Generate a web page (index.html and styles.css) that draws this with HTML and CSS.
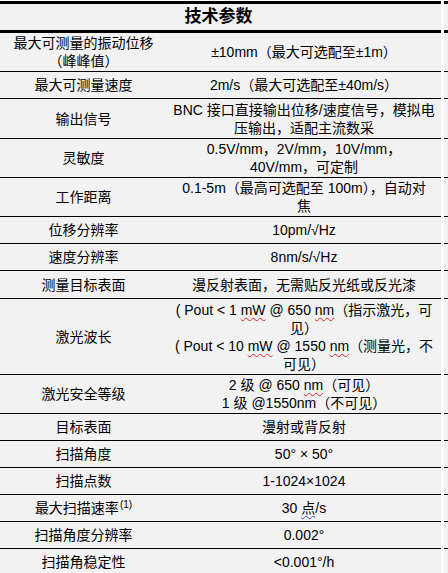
FILE: index.html
```html
<!DOCTYPE html>
<html lang="zh-CN">
<head>
<meta charset="utf-8">
<title>技术参数</title>
<link rel="stylesheet" href="styles.css">
</head>
<body>
<div class="sheet">
  <div class="row head">
    <div class="cell title"><span class="t">技术参数</span></div>
    <div class="gap"></div>
    <div class="stub"></div>
  </div>
  <div class="row h39">
    <div class="cell"><span class="t">最大可测量的振动位移<br>（峰峰值）</span></div>
    <div class="cell"><span class="t">±10mm（最大可选配至±1m）</span></div>
    <div class="gap"></div><div class="stub"></div>
  </div>
  <div class="row h27">
    <div class="cell"><span class="t">最大可测量速度</span></div>
    <div class="cell"><span class="t">2m/s（最大可选配至±40m/s）</span></div>
    <div class="gap"></div><div class="stub"></div>
  </div>
  <div class="row h40">
    <div class="cell"><span class="t">输出信号</span></div>
    <div class="cell"><span class="t">BNC 接口直接输出位移/速度信号，模拟电<br>压输出，适配主流数采</span></div>
    <div class="gap"></div><div class="stub"></div>
  </div>
  <div class="row h39">
    <div class="cell"><span class="t">灵敏度</span></div>
    <div class="cell"><span class="t">0.5V/mm，2V/mm，10V/mm，<br>40V/mm，可定制</span></div>
    <div class="gap"></div><div class="stub"></div>
  </div>
  <div class="row h39">
    <div class="cell"><span class="t">工作距离</span></div>
    <div class="cell"><span class="t">0.1-5m（最高可选配至 100m），自动对<br>焦</span></div>
    <div class="gap"></div><div class="stub"></div>
  </div>
  <div class="row h27">
    <div class="cell"><span class="t">位移分辨率</span></div>
    <div class="cell"><span class="t">10pm/√Hz</span></div>
    <div class="gap"></div><div class="stub"></div>
  </div>
  <div class="row h27">
    <div class="cell"><span class="t">速度分辨率</span></div>
    <div class="cell"><span class="t">8nm/s/√Hz</span></div>
    <div class="gap"></div><div class="stub"></div>
  </div>
  <div class="row h28">
    <div class="cell"><span class="t">测量目标表面</span></div>
    <div class="cell"><span class="t">漫反射表面，无需贴反光纸或反光漆</span></div>
    <div class="gap"></div><div class="stub"></div>
  </div>
  <div class="row h76">
    <div class="cell"><span class="t">激光波长</span></div>
    <div class="cell"><span class="t">( Pout &lt; 1 <span class="sp">mW</span> @ 650 <span class="sp">nm</span>（指示激光，可<br>见）<br>( Pout &lt; 10 <span class="sp">mW</span> @ 1550 <span class="sp">nm</span>（测量光，不<br>可见）</span></div>
    <div class="gap"></div><div class="stub"></div>
  </div>
  <div class="row h39">
    <div class="cell"><span class="t">激光安全等级</span></div>
    <div class="cell"><span class="t">2 级 @ 650 <span class="sp">nm</span>（可见）<br>1 级 @1550nm（不可见）</span></div>
    <div class="gap"></div><div class="stub"></div>
  </div>
  <div class="row h27">
    <div class="cell"><span class="t">目标表面</span></div>
    <div class="cell"><span class="t">漫射或背反射</span></div>
    <div class="gap"></div><div class="stub"></div>
  </div>
  <div class="row h27">
    <div class="cell"><span class="t">扫描角度</span></div>
    <div class="cell"><span class="t">50° × 50°</span></div>
    <div class="gap"></div><div class="stub"></div>
  </div>
  <div class="row h27">
    <div class="cell"><span class="t">扫描点数</span></div>
    <div class="cell"><span class="t">1-1024×1024</span></div>
    <div class="gap"></div><div class="stub"></div>
  </div>
  <div class="row h27">
    <div class="cell"><span class="t">最大扫描速率<sup class="note">(1)</sup></span></div>
    <div class="cell"><span class="t">30 <span class="gr">点</span>/s</span></div>
    <div class="gap"></div><div class="stub"></div>
  </div>
  <div class="row h27">
    <div class="cell"><span class="t">扫描角度分辨率</span></div>
    <div class="cell"><span class="t">0.002°</span></div>
    <div class="gap"></div><div class="stub"></div>
  </div>
  <div class="row h27">
    <div class="cell"><span class="t">扫描角稳定性</span></div>
    <div class="cell"><span class="t">&lt;0.001°/h</span></div>
    <div class="gap"></div><div class="stub"></div>
  </div>
</div>
</body>
</html>
```

FILE: styles.css
```css
* { box-sizing: border-box; }

html, body {
  margin: 0;
  padding: 0;
  background: #ffffff;
}

body {
  padding-top: 1px;
  font-family: "Liberation Sans", "Noto Sans CJK SC", sans-serif;
  font-size: 14px;
  line-height: 18px;
  color: #000000;
  width: 448px;
  overflow: hidden;
}

.sheet {
  display: flex;
  flex-direction: column;
}

.row {
  display: grid;
  grid-template-columns: 167px 274px 3px 1fr;
}

.head {
  grid-template-columns: 441px 3px 1fr;
  height: 32px;
}

.h27 { height: 27px; }
.h28 { height: 28px; }
.h39 { height: 39px; }
.h40 { height: 40px; }
.h76 { height: 76px; }

.cell,
.stub {
  background: #f2f2f2;
  border-bottom: 1px solid #000000;
}

.cell {
  display: flex;
  align-items: center;
  justify-content: center;
  text-align: center;
  padding: 0 2px;
  white-space: nowrap;
}

.t {
  display: block;
}

.gap {
  background: #ffffff;
}

.head .cell,
.head .stub {
  border-top: 3px solid #000000;
  border-bottom: 3px solid #000000;
}

.title {
  font-weight: bold;
  font-size: 17px;
  padding-right: 6px;
}

.sp {
  text-decoration: underline wavy #e02020;
  text-decoration-thickness: 1px;
  text-underline-offset: 2px;
}

.gr {
  text-decoration: underline wavy #3050c0;
  text-decoration-thickness: 1px;
  text-underline-offset: 2px;
}

.note {
  font-size: 10px;
  line-height: 0;
  vertical-align: 5px;
  margin-left: 1px;
}
```
